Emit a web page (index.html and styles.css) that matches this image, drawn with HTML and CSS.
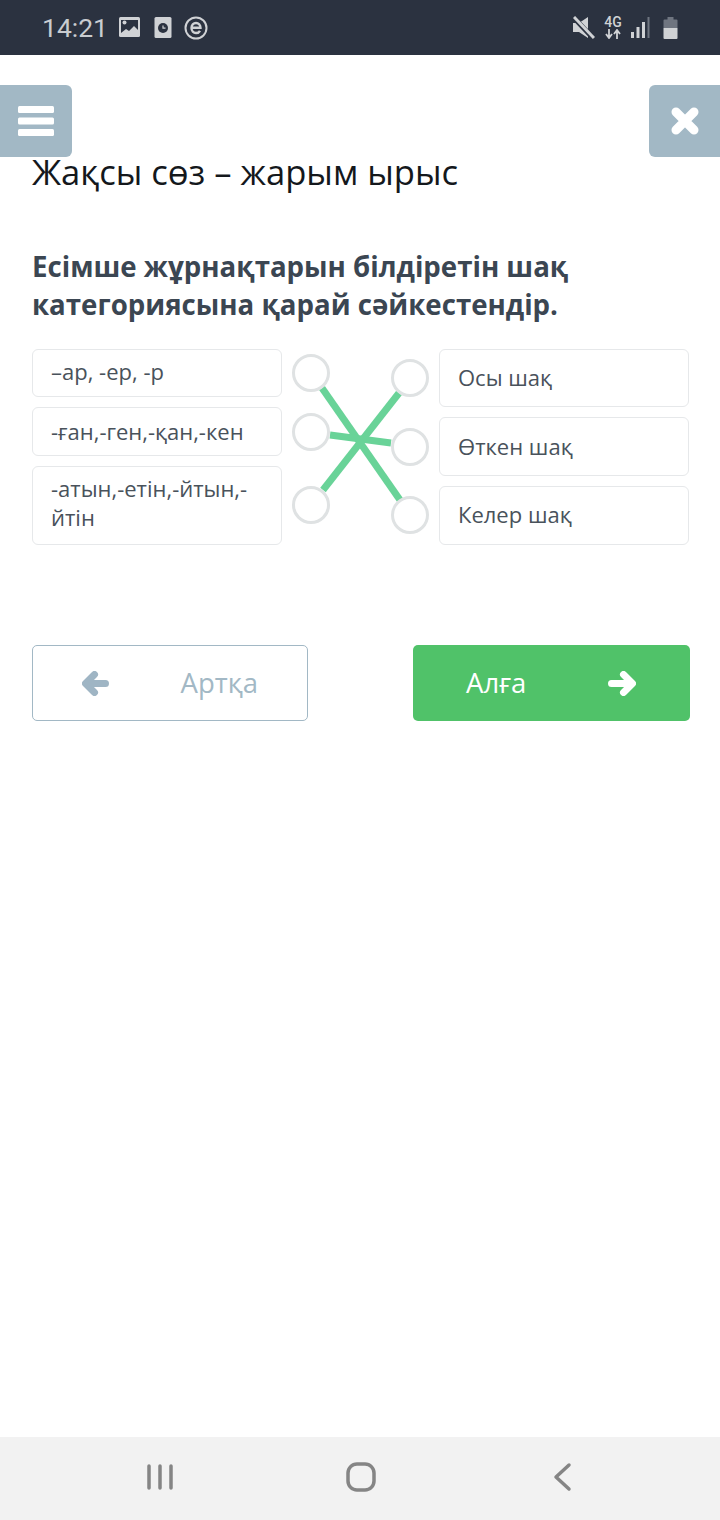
FILE: index.html
```html
<!DOCTYPE html>
<html lang="en">
<head>
    <meta charset="UTF-8">
    <meta name="viewport" content="width=device-width, initial-scale=1.0">
    <title>Жақсы сөз – жарым ырыс</title>
    <link rel="stylesheet" href="styles.css">
</head>
<body>

    <!-- Status Bar -->
    <div class="status-bar">
        <div class="status-left">
            <span class="clock">14:21</span>
            <svg class="icon-gallery" width="21" height="21" viewBox="0 0 21 21">
                <rect x="0" y="0" width="21" height="20" rx="1.5" fill="#d0d2d5"/>
                <path d="M2 3h17v10l-4-4-5 5-3-2-5 4z" fill="#2b3240"/>
                <circle cx="5.5" cy="5.5" r="2" fill="#d0d2d5"/>
            </svg>
            <svg class="icon-clock" width="18" height="21" viewBox="0 0 18 21">
                <rect x="0.500" y="0" width="17" height="21" rx="1.5" fill="#d0d2d5"/>
                <circle cx="9" cy="11" r="5" fill="#2b3240"/>
                <path d="M9 8.500v2.700h2.500" fill="none" stroke="#d0d2d5" stroke-width="1.200"/>
            </svg>
            <svg class="icon-e" width="24" height="24" viewBox="0 0 24 24">
                <circle cx="12" cy="12" r="10.500" fill="none" stroke="#d0d2d5" stroke-width="2"/>
                <path d="M7.500 11.800h9c0-3-2-4.800-4.500-4.800s-4.500 2-4.500 5 2 5 4.500 5c1.800 0 3.200-.8 4-2.200" fill="none" stroke="#d0d2d5" stroke-width="2.400"/>
            </svg>
        </div>
        <div class="status-right">
            <svg width="22" height="24" viewBox="0 0 22 24">
                <path d="M0 7h6l9-6v21l-9-6H0z" fill="#d0d2d5"/>
                <path d="M1 2l19 20" stroke="#2b3240" stroke-width="5"/>
                <path d="M1 1l20 21" stroke="#d0d2d5" stroke-width="3"/>
            </svg>
            <div class="net">
                <span>4G</span>
                <svg width="16" height="10" viewBox="0 0 16 10">
                    <path d="M4 0v8M1 5l3 4 3-4M12 10V2M9 5l3-4 3 4" fill="none" stroke="#d0d2d5" stroke-width="1.800"/>
                </svg>
            </div>
            <svg width="19" height="21" viewBox="0 0 19 21">
                <rect x="0" y="15" width="3" height="6" fill="#d0d2d5"/>
                <rect x="5.500" y="10" width="3" height="11" fill="#d0d2d5"/>
                <rect x="11" y="5" width="3" height="16" fill="#d0d2d5"/>
                <rect x="16.500" y="0" width="2" height="21" fill="#6f7580"/>
            </svg>
            <svg class="icon-battery" width="15" height="22" viewBox="0 0 15 22">
                <path d="M4.500 0h6v2.500h3a1 1 0 0 1 1 1V11H.5V3.500a1 1 0 0 1 1-1h3z" fill="#6f7580"/>
                <path d="M.5 11h14v10a1 1 0 0 1-1 1h-12a1 1 0 0 1-1-1z" fill="#d0d2d5"/>
            </svg>
        </div>
    </div>

    <!-- Floating Buttons -->
    <div class="float-btn menu-btn">
        <svg width="36" height="30" viewBox="0 0 36 30">
            <rect x="0" y="0" width="36" height="7" rx="1.500" fill="#fff"/>
            <rect x="0" y="11.500" width="36" height="7" rx="1.500" fill="#fff"/>
            <rect x="0" y="23" width="36" height="7" rx="1.500" fill="#fff"/>
        </svg>
    </div>
    <div class="float-btn close-btn">
        <svg width="30" height="30" viewBox="0 0 30 30">
            <path d="M6 6L24 24M24 6L6 24" stroke="#fff" stroke-width="9" stroke-linecap="round"/>
        </svg>
    </div>

    <!-- Content -->
    <div class="content">
        <h1 class="title">Жақсы сөз – жарым ырыс</h1>
        <h2 class="question">Есімше жұрнақтарын білдіретін шақ категориясына қарай сәйкестендір.</h2>

        <div class="match">
            <div class="match-col">
                <div class="card">–ар, -ер, -р</div>
                <div class="card card-mid">-ған,-ген,-қан,-кен</div>
                <div class="card card-last">-атын,-етін,-йтын,-йтін</div>
            </div>

            <svg class="links" width="157" height="196" viewBox="282 349 157 196">
                <line x1="322" y1="388" x2="400" y2="500"/>
                <line x1="330" y1="435" x2="391" y2="443"/>
                <line x1="323" y1="490" x2="399" y2="393"/>
                <circle cx="311" cy="373" r="17.500"/>
                <circle cx="311" cy="432" r="17.500"/>
                <circle cx="311" cy="505" r="17.500"/>
                <circle cx="410" cy="378" r="17.500"/>
                <circle cx="410" cy="447" r="17.500"/>
                <circle cx="410" cy="515" r="17.500"/>
            </svg>

            <div class="match-col">
                <div class="card card-right">Осы шақ</div>
                <div class="card card-right card-right-mid">Өткен шақ</div>
                <div class="card card-right card-last">Келер шақ</div>
            </div>
        </div>

        <div class="nav">
            <div class="nav-btn back">
                <svg width="27" height="25" viewBox="0 0 27 25">
                    <path d="M12.500 3.500L3.500 12.500l9 9M5 12.500h18.500" fill="none" stroke="#9fb5c4" stroke-width="7" stroke-linecap="round" stroke-linejoin="round"/>
                </svg>
                <span>Артқа</span>
            </div>
            <div class="nav-btn next">
                <span>Алға</span>
                <svg width="28" height="25" viewBox="0 0 28 25">
                    <path d="M15.500 3.500l9 9-9 9M23 12.500H3.500" fill="none" stroke="#fff" stroke-width="7" stroke-linecap="round" stroke-linejoin="round"/>
                </svg>
            </div>
        </div>
    </div>

    <!-- Android Nav Bar -->
    <div class="system-bar">
        <svg width="30" height="30" viewBox="0 0 30 30">
            <path d="M4 4v22M15 4v22M26 4v22" stroke="#858585" stroke-width="3.500" stroke-linecap="round"/>
        </svg>
        <svg width="30" height="30" viewBox="0 0 30 30">
            <rect x="2" y="2" width="26" height="26" rx="9" fill="none" stroke="#858585" stroke-width="3.500"/>
        </svg>
        <svg width="30" height="30" viewBox="0 0 30 30">
            <path d="M22 3L9 15l13 12" fill="none" stroke="#858585" stroke-width="3.500" stroke-linecap="round" stroke-linejoin="round"/>
        </svg>
    </div>

</body>
</html>
```

FILE: styles.css
```css
/* General Styling */
* {
    box-sizing: border-box;
}

html, body {
    height: 100%;
}

body {
    margin: 0;
    display: flex;
    flex-direction: column;
    position: relative;
    background: #fff;
    font-family: "Open Sans", sans-serif;
    overflow: hidden;
}

/* Status Bar */
.status-bar {
    height: 55px;
    flex-shrink: 0;
    display: flex;
    justify-content: space-between;
    align-items: center;
    padding: 0 42px 0 42px;
    background: #2b3240;
}

.status-left, .status-right {
    display: flex;
    align-items: center;
}

.clock {
    font-family: Roboto, sans-serif;
    font-size: 26.5px;
    color: #c9ccd0;
    margin-right: 11px;
}

.icon-gallery { margin-right: 14px; }
.icon-clock { margin-right: 12px; }

.status-right {
    gap: 10px;
}

.net {
    display: flex;
    flex-direction: column;
    align-items: center;
    width: 16px;
    color: #d0d2d5;
}

.net span {
    font-family: Roboto, sans-serif;
    font-size: 14px;
    font-weight: 500;
    line-height: 13px;
}

.icon-battery { margin-left: 3px; }

/* Floating Buttons */
.float-btn {
    position: absolute;
    top: 85px;
    height: 72px;
    display: flex;
    align-items: center;
    justify-content: center;
    background: #a2b8c5;
}

.menu-btn {
    left: 0;
    width: 72px;
    border-radius: 0 6px 6px 0;
}

.close-btn {
    right: 0;
    width: 71px;
    border-radius: 6px 0 0 6px;
}

/* Content */
.content {
    flex: 1;
    padding: 0 30px 0 32px;
}

.title {
    margin: 94px 0 0;
    font-size: 34.6px;
    font-weight: 400;
    line-height: 46px;
    color: #14181c;
}

.question {
    margin: 53px 0 0;
    font-size: 27.65px;
    font-weight: 700;
    line-height: 37.5px;
    color: #3b4652;
}

/* Matching Block */
.match {
    display: flex;
    margin-top: 26px;
    width: 657px;
}

.match-col {
    width: 250px;
    display: flex;
    flex-direction: column;
    gap: 10px;
}

.card {
    padding: 7px 18px 11px;
    border: 1px solid #e6e8ea;
    border-radius: 6px;
    font-size: 22px;
    line-height: 28.4px;
    color: #49525b;
    background: #fff;
}

.card-mid {
    padding: 9px 18px;
}

.card-last {
    flex: 1;
    line-height: 29.5px;
}

.card-right {
    padding: 13px 18px 15px;
}

.card-right-mid {
    padding: 14px 18px;
}

.links {
    flex-shrink: 0;
}

.links line {
    stroke: #69d398;
    stroke-width: 7;
}

.links circle {
    fill: #fff;
    stroke: #dfe2e3;
    stroke-width: 3;
}

/* Back / Next Buttons */
.nav {
    display: flex;
    justify-content: space-between;
    margin-top: 100px;
}

.nav-btn {
    width: 277px;
    height: 76px;
    display: flex;
    align-items: center;
    justify-content: space-between;
    border-radius: 5px;
    font-size: 27.5px;
}

.nav-btn span {
    margin-bottom: 2px;
}

.back {
    width: 276px;
    padding: 0 49px;
    border: 1px solid #a2b8c5;
    color: #a2b8c5;
}

.next {
    padding: 0 54px 0 53px;
    background: #50c269;
    color: #fff;
}

/* Android Nav Bar */
.system-bar {
    height: 83px;
    flex-shrink: 0;
    display: flex;
    align-items: center;
    justify-content: space-between;
    padding: 0 143px 3px 145px;
    background: #f2f2f2;
}
```
